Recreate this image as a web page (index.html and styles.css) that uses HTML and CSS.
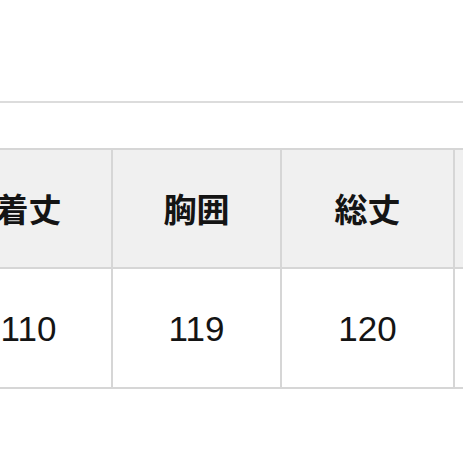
FILE: index.html
```html
<!DOCTYPE html>
<html lang="ja">
<head>
<meta charset="utf-8">
<link rel="stylesheet" href="styles.css">
</head>
<body>
<div class="page">
  <div class="rule"></div>
  <div class="table-wrap">
    <table class="size-table">
      <thead>
        <tr>
          <th class="c1">着丈</th>
          <th class="c2">胸囲</th>
          <th class="c3">総丈</th>
          <th class="c4"></th>
        </tr>
      </thead>
      <tbody>
        <tr>
          <td class="c1">110</td>
          <td class="c2">119</td>
          <td class="c3">120</td>
          <td class="c4"></td>
        </tr>
      </tbody>
    </table>
  </div>
</div>
</body>
</html>
```

FILE: styles.css
```css
html, body {
  margin: 0;
  padding: 0;
  background: #ffffff;
  overflow: hidden;
}

.page {
  width: 463px;
  height: 463px;
  overflow: hidden;
  font-family: "Liberation Sans", "Noto Sans CJK JP", sans-serif;
  color: #141414;
}

.rule {
  margin-top: 101px;
  height: 2px;
  background: #dcdcdc;
}

.table-wrap {
  margin-top: 45px;
  margin-left: -56px;
}

.size-table {
  border-collapse: collapse;
  table-layout: fixed;
  width: 620px;
}

.size-table th,
.size-table td {
  border: 2px solid #d6d6d6;
  text-align: center;
  vertical-align: middle;
  padding: 0;
}

.size-table th {
  height: 117px;
  background: #f0f0f0;
  font-family: "Noto Sans CJK JP", sans-serif;
  font-weight: 700;
  font-size: 33px;
  line-height: 1;
}

.size-table td {
  height: 118px;
  background: #ffffff;
  font-family: "Liberation Sans", sans-serif;
  font-weight: 400;
  font-size: 35px;
  line-height: 1;
}

.c1 { width: 165px; }
.c2 { width: 167px; }
.c3 { width: 171px; }
.c4 { width: 117px; }
```
